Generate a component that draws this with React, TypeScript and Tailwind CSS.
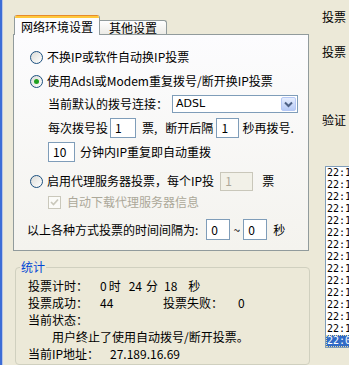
import React from "react";

function Radio({ checked }: { checked?: boolean }) {
  return (
    <span className="w-[13px] h-[13px] shrink-0 rounded-full border border-[#1C5180] bg-linear-to-br from-[#DCDCD7] to-white flex items-center justify-center">
      {checked && <span className="w-[5px] h-[5px] rounded-full bg-[#21A121]" />}
    </span>
  );
}

function Box({ v, className, disabled }: { v: string; className: string; disabled?: boolean }) {
  return (
    <span
      className={
        "shrink-0 flex items-center pl-[4px] border " +
        (disabled ? "border-[#C9C7BA] bg-[#F2F1E8] text-[#ACA899] " : "border-[#7F9DB9] bg-white ") +
        className
      }
    >
      {v}
    </span>
  );
}

const listItems = [
  "22:18:05 投票成功",
  "22:17:52 投票成功",
  "22:17:40 投票成功",
  "22:17:28 投票成功",
  "22:17:15 投票成功",
  "22:16:59 投票成功",
  "22:16:44 投票成功",
  "22:16:30 投票成功",
  "22:16:17 投票成功",
  "22:16:02 投票成功",
  "22:15:49 投票成功",
  "22:15:36 投票成功",
  "22:15:21 投票成功",
  "22:15:08 投票成功",
];

export default function App() {
  return (
    <div className="w-[349px] h-[365px] overflow-hidden bg-[#ECE9D8] flex font-['Noto_Sans_CJK_SC',sans-serif] text-[12px] leading-[14px] text-black">
      {/* window edge */}
      <div className="w-[2px] shrink-0 bg-[#3D6DD6]" />
      <div className="w-[1px] shrink-0 bg-[#B9C6E6]" />

      {/* left column */}
      <div className="w-[309px] shrink-0 flex flex-col">
        {/* tabs */}
        <div className="mt-[15px] ml-[11px] h-[20px] flex items-end">
          <div className="relative z-10 w-[86px] h-[20px] bg-[#FCFCFE] border-x border-[#919B9C] rounded-t-[3px] flex flex-col overflow-hidden">
            <div className="h-[1px] bg-[#E68B2C]" />
            <div className="h-[2px] bg-[#FFC83C]" />
            <div className="flex-1 flex items-center justify-center pt-[1px]">网络环境设置</div>
          </div>
          <div className="w-[67px] h-[14px] mb-[1px] border-t border-r border-[#919B9C] rounded-tr-[3px] bg-linear-to-b from-white to-[#ECEBE6] flex items-center justify-center pt-[1px]">
            其他设置
          </div>
        </div>

        {/* tab page */}
        <div className="ml-[10px] -mt-[1px] w-[296px] h-[217px] border border-[#919B9C] bg-linear-to-b from-[#FCFCFE] to-[#F4F3EE] flex flex-col">
          <div className="mt-[12px] h-[20px] flex items-center pl-[16px]">
            <Radio />
            <span className="ml-[4px]">不换IP或软件自动换IP投票</span>
          </div>
          <div className="mt-[4px] h-[20px] flex items-center pl-[16px]">
            <Radio checked />
            <span className="ml-[4px]">使用Adsl或Modem重复拨号/断开换IP投票</span>
          </div>
          <div className="mt-[4px] h-[18px] flex items-center pl-[34px]">
            <span>当前默认的拨号连接：</span>
            <span className="ml-[4px] w-[126px] h-[18px] border border-[#7F9DB9] bg-white flex items-center">
              <span className="flex-1 pl-[3px] text-[11px] font-['DejaVu_Sans',sans-serif]">ADSL</span>
              <span className="mr-[1px] w-[15px] h-[14px] rounded-[2px] border border-[#B5C8F5] bg-linear-to-b from-[#E6EEFE] to-[#B6CAF6] flex items-center justify-center">
                <svg width="9" height="7" viewBox="0 0 9 7">
                  <path d="M1 1.5 L4.5 5 L8 1.5" stroke="#4D6185" strokeWidth="2" fill="none" />
                </svg>
              </span>
            </span>
          </div>
          <div className="mt-[5px] h-[20px] flex items-center pl-[34px]">
            <span>每次拨号投</span>
            <Box v="1" className="ml-[2px] w-[26px] h-[20px]" />
            <span className="ml-[6px]">票,</span>
            <span className="ml-[8px]">断开后隔</span>
            <Box v="1" className="ml-[3px] w-[23px] h-[20px]" />
            <span className="ml-[3px]">秒再拨号.</span>
          </div>
          <div className="mt-[4px] h-[20px] flex items-center pl-[34px]">
            <Box v="10" className="w-[27px] h-[20px]" />
            <span className="ml-[5px]">分钟内IP重复即自动重拨</span>
          </div>
          <div className="mt-[9px] h-[20px] flex items-center pl-[16px]">
            <Radio />
            <span className="ml-[4px]">启用代理服务器投票，每个IP投</span>
            <Box v="1" disabled className="ml-[6px] w-[33px] h-[19px]" />
            <span className="ml-[9px]">票</span>
          </div>
          <div className="mt-[4px] h-[14px] flex items-center pl-[34px]">
            <span className="w-[13px] h-[13px] shrink-0 border border-[#CAC8BB] bg-[#FBFBF8] flex items-center justify-center">
              <svg width="9" height="9" viewBox="0 0 9 9">
                <path d="M1 4 L3.5 6.5 L8 1.5" stroke="#CAC8BB" strokeWidth="1.7" fill="none" />
              </svg>
            </span>
            <span className="ml-[6px] text-[#ACA899]">自动下载代理服务器信息</span>
          </div>
          <div className="mt-[10px] h-[21px] flex items-center pl-[13px]">
            <span>以上各种方式投票的时间间隔为:</span>
            <Box v="0" className="ml-[8px] w-[24px] h-[21px]" />
            <span className="w-[13px] text-center">~</span>
            <Box v="0" className="w-[24px] h-[21px]" />
            <span className="ml-[6px]">秒</span>
          </div>
        </div>

        {/* stats group */}
        <fieldset className="mt-[10px] ml-[12px] w-[295px] flex-1 border border-[#D0D0BF] rounded-[4px] pl-[4px] min-w-0">
          <legend className="px-[1px] text-[#0046D5] leading-[12px]">统计</legend>
          <div className="mt-[4px] h-[17px] flex items-center ml-[8px]">
            <span className="w-[72px]">投票计时：</span>
            <span>0</span>
            <span className="ml-[2px]">时</span>
            <span className="ml-[8px]">24</span>
            <span className="ml-[4px]">分</span>
            <span className="ml-[6px]">18</span>
            <span className="ml-[11px]">秒</span>
          </div>
          <div className="h-[17px] flex items-center ml-[8px]">
            <span className="w-[72px]">投票成功：</span>
            <span className="w-[63px]">44</span>
            <span className="w-[75px]">投票失败：</span>
            <span>0</span>
          </div>
          <div className="h-[17px] flex items-center ml-[8px]">当前状态：</div>
          <div className="h-[17px] flex items-center ml-[32px]">用户终止了使用自动拨号/断开投票。</div>
          <div className="h-[17px] flex items-center ml-[8px]">
            <span className="w-[82px]">当前IP地址：</span>
            <span>27.189.16.69</span>
          </div>
        </fieldset>
      </div>

      {/* right column */}
      <div className="flex-1 min-w-0 flex flex-col pl-[10px] overflow-hidden">
        <div className="mt-[11px] h-[12px] leading-[12px] whitespace-nowrap">投票</div>
        <div className="mt-[23px] h-[12px] leading-[12px] whitespace-nowrap">投票</div>
        <div className="mt-[56px] h-[12px] leading-[12px] whitespace-nowrap">验证</div>
        <div className="mt-[40px] ml-[3px] w-[60px] h-[182px] shrink-0 border border-[#7F9DB9] bg-white flex flex-col overflow-hidden font-['DejaVu_Sans_Mono','Noto_Sans_CJK_SC',monospace] text-[10px]">
          {listItems.map((t, i) => (
            <div key={i} className="h-[12px] leading-[12px] pl-[1px] whitespace-nowrap">
              {t}
            </div>
          ))}
          <div className="h-[12px] leading-[10px] whitespace-nowrap bg-[#316AC5] text-white border border-dotted border-[#E8D9A0]">
            22:05:12 投票成功
          </div>
        </div>
      </div>
    </div>
  );
}
